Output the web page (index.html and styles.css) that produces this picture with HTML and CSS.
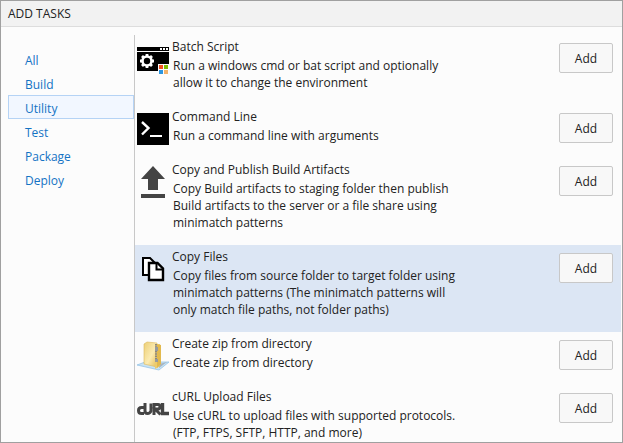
FILE: index.html
```html
<!DOCTYPE html>
<html lang="en">
<head>
<meta charset="UTF-8" />
<meta name="viewport" content="width=device-width, initial-scale=1.0" />
<title>Add Tasks</title>
<link rel="stylesheet" href="styles.css">
</head>
<body>

<div class="dialog">
  <header class="dialog-header">
    <h1>ADD TASKS</h1>
  </header>

  <div class="dialog-body">
    <!-- ───── CATEGORIES ───── -->
    <nav class="categories">
      <a href="#all">All</a>
      <a href="#build">Build</a>
      <a href="#utility" class="active">Utility</a>
      <a href="#test">Test</a>
      <a href="#package">Package</a>
      <a href="#deploy">Deploy</a>
    </nav>

    <!-- ───── TASK LIST ───── -->
    <ul class="tasks">
      <li class="task">
        <svg class="icon" viewBox="0 0 32 32" aria-hidden="true">
          <path d="M0 4h32v4H0zM0 9h32v19H0z" fill="#000"/>
          <path d="M23 5h2v2h-2zM26 5h2v2h-2zM29 5h2v2h-2z" fill="#fff"/>
          <circle cx="10" cy="18" r="4.5" fill="none" stroke="#fff" stroke-width="2.6"/>
          <path d="M10 11v2.500M10 22.500v2.500M3 18h2.500M14.500 18h2.500M5 13l1.800 1.800M13.200 21.200L15 23M15 13l-1.800 1.800M6.800 21.200L5 23" stroke="#fff" stroke-width="2.800"/>
          <path d="M21 21h11v11H21z" fill="#fcfcfc"/>
          <path d="M22 22h4v4h-4z" fill="#f25022"/>
          <path d="M27 22h4v4h-4z" fill="#7fba00"/>
          <path d="M22 27h4v4h-4z" fill="#2b95e0"/>
          <path d="M27 27h4v4h-4z" fill="#f3b36b"/>
        </svg>
        <div class="info">
          <h2>Batch Script</h2>
          <p>Run a windows cmd or bat script and optionally allow it to change the environment</p>
        </div>
        <button type="button" aria-label="Add Batch Script">Add</button>
      </li>
      <li class="task">
        <svg class="icon" viewBox="0 0 32 32" aria-hidden="true">
          <path d="M0 0h32v32H0z" fill="#000"/>
          <path d="M5 9l6.500 6L5 21.500" fill="none" stroke="#fff" stroke-width="2.400"/>
          <path d="M13 22h12v2H13z" fill="#fff"/>
        </svg>
        <div class="info">
          <h2>Command Line</h2>
          <p>Run a command line with arguments</p>
        </div>
        <button type="button" aria-label="Add Command Line">Add</button>
      </li>
      <li class="task">
        <svg class="icon" viewBox="0 0 32 32" aria-hidden="true">
          <path d="M16 0l12 13h-7v11H11V13H4zM4 28h24v4H4z" fill="#444"/>
        </svg>
        <div class="info">
          <h2>Copy and Publish Build Artifacts</h2>
          <p>Copy Build artifacts to staging folder then publish Build artifacts to the server or a file share using minimatch patterns</p>
        </div>
        <button type="button" aria-label="Add Copy and Publish Build Artifacts">Add</button>
      </li>
      <li class="task selected">
        <svg class="icon" viewBox="0 0 32 32" aria-hidden="true">
          <path d="M6 5h7l6 6v11H6z" fill="#fff" stroke="#000" stroke-width="2"/>
          <path d="M12 10h8.500l5.500 5.500V27H12z" fill="#fff" stroke="#000" stroke-width="2.400"/>
          <path d="M19.500 10v6.500H26" fill="none" stroke="#000" stroke-width="2"/>
        </svg>
        <div class="info">
          <h2>Copy Files</h2>
          <p>Copy files from source folder to target folder using minimatch patterns (The minimatch patterns will only match file paths, not folder paths)</p>
        </div>
        <button type="button" aria-label="Add Copy Files">Add</button>
      </li>
      <li class="task">
        <svg class="icon" viewBox="0 0 32 32" aria-hidden="true">
          <defs>
            <linearGradient id="folder" x1="0" y1="0" x2="1" y2="1">
              <stop offset="0" stop-color="#edcf76"/>
              <stop offset=".55" stop-color="#fbebb2"/>
              <stop offset="1" stop-color="#e5bd53"/>
            </linearGradient>
          </defs>
          <path d="M0 25l8-3 24 0-10 8z" fill="#c8e3f5" stroke="#8dbfe5" stroke-width=".7"/>
          <path d="M22 24l8-2-8 6z" fill="#a9b5c0"/>
          <path d="M7 4l3-2 10 1v24L7 24z" fill="url(#folder)" stroke="#dcb95d" stroke-width=".6"/>
          <path d="M18 5l5-1v22l-5 3z" fill="#edcb6c"/>
          <path d="M20 4l4 1v19l-4 4z" fill="#e2b94e"/>
          <path d="M19 4v18" stroke="#8a877f" stroke-width="2" stroke-dasharray="1.500 .8"/>
          <path d="M18 7h3v4h-3zM18 19h3v3h-3z" fill="#969a9e"/>
        </svg>
        <div class="info">
          <h2>Create zip from directory</h2>
          <p>Create zip from directory</p>
        </div>
        <button type="button" aria-label="Add Create zip from directory">Add</button>
      </li>
      <li class="task">
        <svg class="icon" viewBox="0 0 32 32" aria-hidden="true">
          <g fill="none" stroke="#444" stroke-width="3">
            <path d="M7 14.500H4.500Q1.500 14.500 1.500 17.500t3 3H7"/>
            <path d="M8 10v8q0 2.500 2.500 2.500T14 18v-7.500"/>
            <path d="M17 22V11.500h4q2 0 2 2.200t-2 2.300h-3l5.500 5.500"/>
            <path d="M25.500 10v10.500H32" stroke-width="3.400"/>
          </g>
        </svg>
        <div class="info">
          <h2>cURL Upload Files</h2>
          <p>Use cURL to upload files with supported protocols. (FTP, FTPS, SFTP, HTTP, and more)</p>
        </div>
        <button type="button" aria-label="Add cURL Upload Files">Add</button>
      </li>
    </ul>
  </div>
</div>

</body>
</html>
```
FILE: styles.css
```css
/* ───── RESET ───── */
*{margin:0;padding:0;box-sizing:border-box}

/* ───── DIALOG ───── */
body{
  background:#fcfcfc;color:#222;
  font-family:"Open Sans","Noto Sans",sans-serif;font-size:12px;line-height:17px;
}
.dialog{
  display:flex;flex-direction:column;height:100vh;
  border:1px solid #a0a0a0;overflow:hidden;
}
.dialog-header{background:#f2f2f2;border-bottom:1px solid #ddd;padding:4px 7px}
.dialog-header h1{font-size:12px;font-weight:400;line-height:17px}
.dialog-body{display:flex;flex:1;min-height:0;padding:8px 1px 0 7px}

/* ───── CATEGORIES ───── */
.categories{
  flex:none;display:flex;flex-direction:column;width:127px;padding-top:12px;
  border-right:1px solid #c8c8c8;
}
.categories a{
  padding:4px 16px 0;border:1px solid transparent;
  color:#1473c4;line-height:18px;text-decoration:none;
}
.categories a.active{background:#f2f7ff;border-color:#b5d3f5}

/* ───── TASK LIST ───── */
.tasks{flex:1;overflow:hidden;list-style:none}
.task{display:flex;align-items:flex-start;gap:3px;padding:2px 8px 13px 2px}
.task.selected{background:#dce6f4}
.icon{flex:none;width:32px;height:32px;margin-top:6px}
.info{flex:1;padding-bottom:1px}
.info h2{font-size:12px;font-weight:400;line-height:20px}
.info p{max-width:290px;padding-left:1px}
.task button{
  width:54px;height:30px;margin-top:6px;
  background:#f8f8f8;border:1px solid #c8c8c8;border-radius:2px;
  color:#222;font:inherit;cursor:pointer;
}
.task button:hover{background:#eee}
```
